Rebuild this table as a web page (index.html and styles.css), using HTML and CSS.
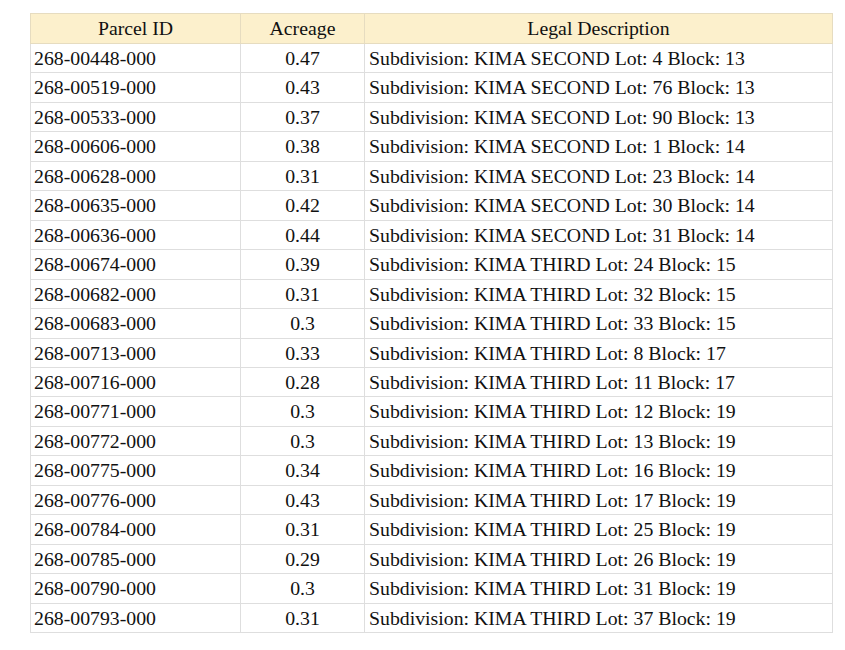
FILE: index.html
```html
<!DOCTYPE html>
<html>
<head>
<meta charset="utf-8">
<link rel="stylesheet" href="styles.css">
</head>
<body>
<table class="parcels">
<colgroup><col class="c-id"><col class="c-ac"><col class="c-legal"></colgroup>
<thead>
<tr><th>Parcel ID</th><th>Acreage</th><th>Legal Description</th></tr>
</thead>
<tbody>
<tr><td>268-00448-000</td><td class="num">0.47</td><td>Subdivision: KIMA SECOND Lot: 4 Block: 13</td></tr>
<tr><td>268-00519-000</td><td class="num">0.43</td><td>Subdivision: KIMA SECOND Lot: 76 Block: 13</td></tr>
<tr><td>268-00533-000</td><td class="num">0.37</td><td>Subdivision: KIMA SECOND Lot: 90 Block: 13</td></tr>
<tr><td>268-00606-000</td><td class="num">0.38</td><td>Subdivision: KIMA SECOND Lot: 1 Block: 14</td></tr>
<tr><td>268-00628-000</td><td class="num">0.31</td><td>Subdivision: KIMA SECOND Lot: 23 Block: 14</td></tr>
<tr><td>268-00635-000</td><td class="num">0.42</td><td>Subdivision: KIMA SECOND Lot: 30 Block: 14</td></tr>
<tr><td>268-00636-000</td><td class="num">0.44</td><td>Subdivision: KIMA SECOND Lot: 31 Block: 14</td></tr>
<tr><td>268-00674-000</td><td class="num">0.39</td><td>Subdivision: KIMA THIRD Lot: 24 Block: 15</td></tr>
<tr><td>268-00682-000</td><td class="num">0.31</td><td>Subdivision: KIMA THIRD Lot: 32 Block: 15</td></tr>
<tr><td>268-00683-000</td><td class="num">0.3</td><td>Subdivision: KIMA THIRD Lot: 33 Block: 15</td></tr>
<tr><td>268-00713-000</td><td class="num">0.33</td><td>Subdivision: KIMA THIRD Lot: 8 Block: 17</td></tr>
<tr><td>268-00716-000</td><td class="num">0.28</td><td>Subdivision: KIMA THIRD Lot: 11 Block: 17</td></tr>
<tr><td>268-00771-000</td><td class="num">0.3</td><td>Subdivision: KIMA THIRD Lot: 12 Block: 19</td></tr>
<tr><td>268-00772-000</td><td class="num">0.3</td><td>Subdivision: KIMA THIRD Lot: 13 Block: 19</td></tr>
<tr><td>268-00775-000</td><td class="num">0.34</td><td>Subdivision: KIMA THIRD Lot: 16 Block: 19</td></tr>
<tr><td>268-00776-000</td><td class="num">0.43</td><td>Subdivision: KIMA THIRD Lot: 17 Block: 19</td></tr>
<tr><td>268-00784-000</td><td class="num">0.31</td><td>Subdivision: KIMA THIRD Lot: 25 Block: 19</td></tr>
<tr><td>268-00785-000</td><td class="num">0.29</td><td>Subdivision: KIMA THIRD Lot: 26 Block: 19</td></tr>
<tr><td>268-00790-000</td><td class="num">0.3</td><td>Subdivision: KIMA THIRD Lot: 31 Block: 19</td></tr>
<tr><td>268-00793-000</td><td class="num">0.31</td><td>Subdivision: KIMA THIRD Lot: 37 Block: 19</td></tr>
</tbody>
</table>
</body>
</html>
```
FILE: styles.css
```css
html, body {
  margin: 0;
  padding: 0;
  background: #ffffff;
}
body {
  padding: 13px 0 0 30px;
}
.parcels {
  border-collapse: collapse;
  width: 802px;
  table-layout: fixed;
  font-family: "Liberation Serif", "Times New Roman", serif;
  font-size: 19.8px;
  color: #111111;
}
.c-id { width: 210px; }
.c-ac { width: 124px; }
.c-legal { width: 468px; }
.parcels th {
  background: #fcf0cc;
  font-weight: normal;
  text-align: center;
  border: 1px solid #e6dcc0;
  padding: 3px 4px;
  line-height: 23px;
}
.parcels td {
  border: 1px solid #dedede;
  padding: 3px 4px;
  line-height: 22.45px;
  text-align: left;
  white-space: nowrap;
}
.parcels td:first-child {
  padding-left: 3px;
}
.parcels td.num {
  text-align: center;
}
```
